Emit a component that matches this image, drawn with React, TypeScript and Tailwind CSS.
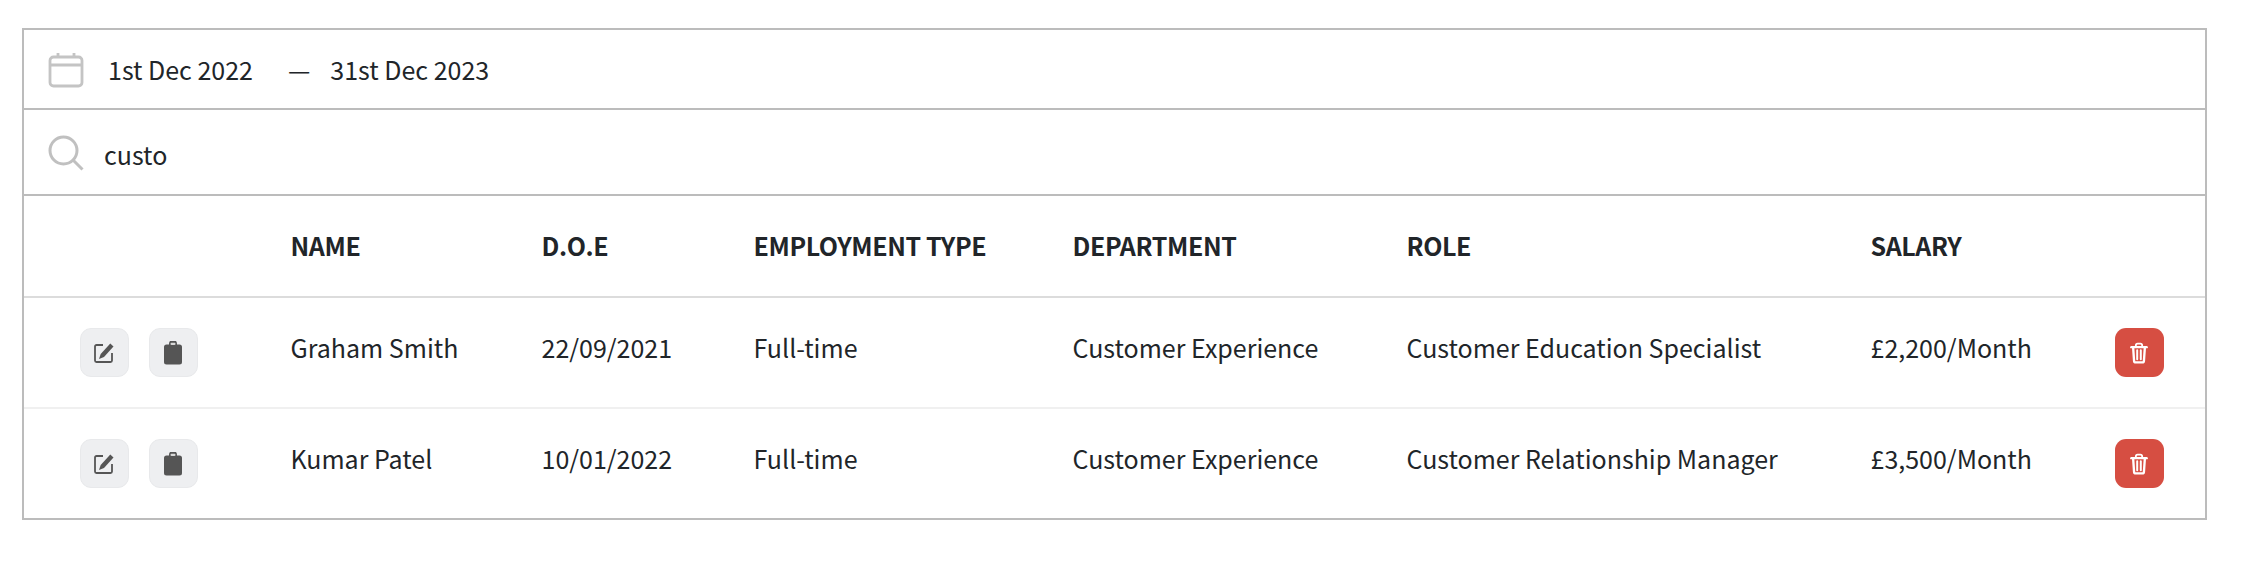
import React from "react";

const rowGrid =
  "grid grid-cols-[266.500px_251px_212px_319px_334px_464px_244px_1fr] items-center";

const cell = "pb-[9px]";

const people = [
  {
    name: "Graham Smith",
    doe: "22/09/2021",
    type: "Full-time",
    department: "Customer Experience",
    role: "Customer Education Specialist",
    salary: "£2,200/Month",
  },
  {
    name: "Kumar Patel",
    doe: "10/01/2022",
    type: "Full-time",
    department: "Customer Experience",
    role: "Customer Relationship Manager",
    salary: "£3,500/Month",
  },
];

const CalendarIcon = () => (
  <svg width="36" height="36" viewBox="0 0 36 36" fill="none" stroke="#c4c4c4" strokeWidth="2.800">
    <rect x="2" y="5" width="32" height="29" rx="3.500" />
    <path d="M2 13h32M10 1v5M26 1v5" />
  </svg>
);

const SearchIcon = () => (
  <svg width="36" height="36" viewBox="0 0 36 36" fill="none" stroke="#c0c0c0" strokeWidth="3">
    <circle cx="15.500" cy="15.500" r="13.500" />
    <path d="M25.500 25.500l9 9" />
  </svg>
);

const EditIcon = () => (
  <svg width="22" height="22" viewBox="0 0 22 22">
    <path
      d="M10 3H3.500A1.500 1.500 0 0 0 2 4.500v14A1.500 1.500 0 0 0 3.500 20h14a1.500 1.500 0 0 0 1.500-1.500V11"
      fill="none"
      stroke="#555"
      strokeWidth="1.800"
    />
    <path d="M17.300 1.500l3.200 3-9.500 10.500-5 2 1.700-5z" fill="#555" />
  </svg>
);

const ClipboardIcon = () => (
  <svg width="22" height="24" viewBox="0 0 22 24">
    <path
      d="M7 3.500V3a4 4 0 0 1 8 0v.5h2.500A2.500 2.500 0 0 1 20 6v15a2.500 2.500 0 0 1-2.500 2.500h-13A2.500 2.500 0 0 1 2 21V6a2.500 2.500 0 0 1 2.500-2.500z"
      fill="#555"
    />
    <rect x="8.500" y="1.800" width="5" height="2.200" rx="1" fill="#d8d8d8" />
  </svg>
);

const TrashIcon = () => (
  <svg width="18" height="24" viewBox="0 0 20 24" fill="none" stroke="#fff">
    <path d="M1.500 5.500h17" strokeWidth="2.600" strokeLinecap="round" />
    <path d="M6.500 5V3.500a2 2 0 0 1 2-2h3a2 2 0 0 1 2 2V5" strokeWidth="2" />
    <path d="M3.500 6l1 14.500a2 2 0 0 0 2 2h7a2 2 0 0 0 2-2l1-14.500" strokeWidth="2.600" />
    <path d="M8 9v10M12 9v10" strokeWidth="2.200" strokeLinecap="round" />
  </svg>
);

const ghostBtn =
  "flex h-[49px] w-[49px] items-center justify-center rounded-[11px] border border-[#e8e9eb] bg-[#eeeff1]";

export default function App() {
  return (
    <div
      className="h-[562px] w-[2244px] bg-white pl-[22px] pt-[28px] text-[25px] text-[#212529]"
      style={{ fontFamily: '"Noto Sans CJK JP", "Noto Sans", sans-serif' }}
    >
      <div className="w-[2185px] border-2 border-[#bcbcbc]">
        {/* Période */}
        <div className="flex h-[80px] items-center border-b-2 border-[#bcbcbc] pl-[24px] pt-[2px]">
          <CalendarIcon />
          <span className="ml-[24px]">1st Dec 2022</span>
          <span className="ml-[35px]">—</span>
          <span className="ml-[20px]">31st Dec 2023</span>
        </div>

        {/* Recherche */}
        <div className="flex h-[86px] items-center border-b-2 border-[#bcbcbc] pl-[24px] pt-[2px]">
          <SearchIcon />
          <span className="ml-[20px] pt-[4px]">custo</span>
        </div>

        {/* Entête */}
        <div
          className={`${rowGrid} h-[102px] border-b-2 border-[#dcdcdc] font-semibold tracking-[-0.380px]`}
        >
          <div />
          <div>NAME</div>
          <div>D.O.E</div>
          <div>EMPLOYMENT TYPE</div>
          <div>DEPARTMENT</div>
          <div>ROLE</div>
          <div>SALARY</div>
          <div />
        </div>

        {people.map((p, i) => (
          <div
            key={p.name}
            className={`${rowGrid} ${i === 0 ? "h-[111px] border-b-2 border-[#f0f0f0]" : "h-[109px]"}`}
          >
            <div className="flex gap-[20px] pl-[55.500px]">
              <button className={ghostBtn}>
                <EditIcon />
              </button>
              <button className={ghostBtn}>
                <ClipboardIcon />
              </button>
            </div>
            <div className={cell}>{p.name}</div>
            <div className={cell}>{p.doe}</div>
            <div className={cell}>{p.type}</div>
            <div className={cell}>{p.department}</div>
            <div className={cell}>{p.role}</div>
            <div className={cell}>{p.salary}</div>
            <div>
              <button className="flex h-[49px] w-[49px] items-center justify-center rounded-[11px] bg-[#d64e42]">
                <TrashIcon />
              </button>
            </div>
          </div>
        ))}
      </div>
    </div>
  );
}
